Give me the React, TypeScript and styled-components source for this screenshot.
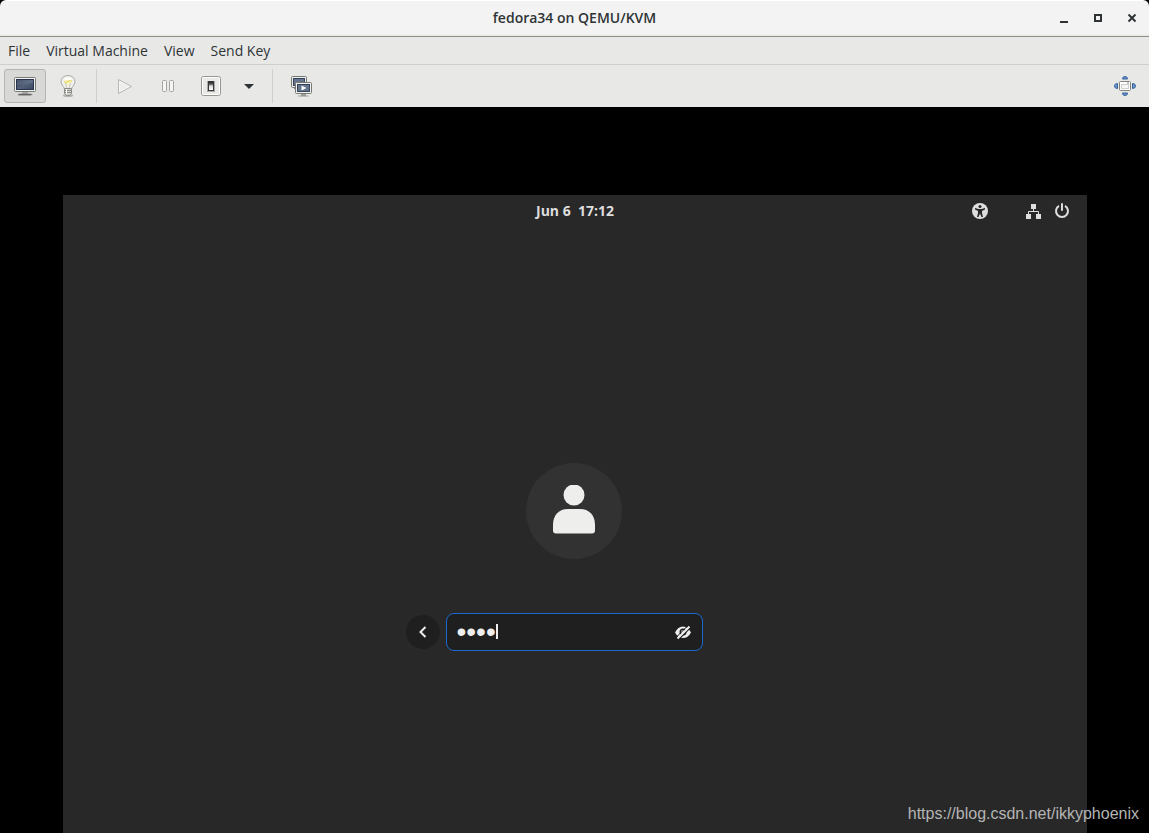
import React from "react";
import styled, { createGlobalStyle } from "styled-components";

const GlobalStyle = createGlobalStyle`
  *, *::before, *::after { box-sizing: border-box; }
  body { margin: 0; background: #000; font-family: "Open Sans", "Noto Sans", sans-serif; }
  button, input { font: inherit; color: inherit; border: 0; padding: 0; margin: 0; background: none; }
  svg { display: block; flex: none; }
`;

const Window = styled.div`
  position: relative;
  display: flex;
  flex-direction: column;
  min-height: 100vh;
  overflow: hidden;
  color: #2e3436;
`;

const TitleBar = styled.header`
  display: grid;
  grid-template-columns: 1fr auto 1fr;
  align-items: center;
  height: 37px;
  padding: 0 9px;
  background: linear-gradient(#fff 0, #fff 1px, #f3f3f3 1px, #f3f3f3 34px, #e4e4e3 36px);
  border-bottom: 1px solid #8f8f88;
  border-radius: 6px 6px 0 0;
`;

const Title = styled.h1`
  grid-column: 2;
  margin: 0;
  font-size: 14px;
  line-height: 20px;
  font-weight: 600;
`;

const WindowControls = styled.div`
  display: flex;
  justify-content: flex-end;
  gap: 18px;
`;

const WindowButton = styled.button`
  width: 16px;
  height: 16px;
`;

const MenuBar = styled.nav`
  display: flex;
  align-items: center;
  gap: 16px;
  height: 28px;
  padding: 0 8px;
  background: #e8e8e7;
  border-bottom: 1px solid #cfcfcd;
`;

const MenuItem = styled.button`
  font-size: 14px;
  line-height: 20px;
`;

const ToolBar = styled.div`
  display: flex;
  align-items: center;
  gap: 1px;
  height: 42px;
  padding: 0 3px 0 4px;
  background: #e8e8e7;
`;

const ToolButton = styled.button<{ $active?: boolean; $narrow?: boolean }>`
  display: flex;
  align-items: center;
  justify-content: center;
  width: ${(p) => (p.$narrow ? 32 : 42)}px;
  height: 34px;
  border: 1px solid ${(p) => (p.$active ? "#b4b4b1" : "transparent")};
  border-radius: 3px;
  background: ${(p) => (p.$active ? "#d8d8d6" : "transparent")};
`;

const Separator = styled.span`
  width: 1px;
  height: 34px;
  margin: 0 6px;
  background: #cfcfcd;
`;

const Spacer = styled.span`
  flex: 1;
`;

const Display = styled.main`
  flex: 1;
  display: flex;
  padding: 88px 62px 0 63px;
  background: #000;
`;

const GuestScreen = styled.section`
  flex: 1;
  background: #282828;
  color: #dedede;
`;

const TopPanel = styled.div`
  display: grid;
  grid-template-columns: 1fr auto 1fr;
  align-items: center;
  height: 32px;
  padding: 0 17px;
`;

const Clock = styled.time`
  grid-column: 2;
  font-size: 14px;
  line-height: 20px;
  font-weight: 700;
  white-space: pre;
`;

const StatusArea = styled.div`
  display: flex;
  justify-content: flex-end;
  gap: 13px;
`;

const StatusButton = styled.button<{ $apart?: boolean }>`
  width: 16px;
  height: 16px;
  margin-right: ${(p) => (p.$apart ? 24 : 0)}px;
`;

const Login = styled.form`
  display: flex;
  flex-direction: column;
  align-items: center;
  gap: 54px;
  padding: 236px 2px 40px 0;
`;

const Avatar = styled.div`
  display: flex;
  align-items: center;
  justify-content: center;
  width: 96px;
  height: 96px;
  border-radius: 50%;
  background: #323232;
`;

const EntryRow = styled.div`
  display: flex;
  align-items: center;
  gap: 6px;
  padding-right: 40px;
`;

const BackButton = styled.button`
  display: flex;
  align-items: center;
  justify-content: center;
  width: 34px;
  height: 34px;
  border-radius: 50%;
  background: #1f1f1f;
`;

const Entry = styled.div`
  position: relative;
  display: flex;
  align-items: center;
  width: 257px;
  height: 38px;
  padding: 0 10px;
  border: 1px solid #1b6acb;
  border-radius: 8px;
  background: #1f1f1f;
`;

const PasswordInput = styled.input`
  flex: 1;
  min-width: 0;
  height: 32px;
  color: #eee;
  font-family: "Liberation Sans", sans-serif;
  font-size: 28px;
  line-height: 32px;
  outline: none;
`;

const Caret = styled.span`
  position: absolute;
  left: 49px;
  top: 10px;
  width: 2px;
  height: 15px;
  background: #eee;
`;

const RevealButton = styled.button`
  width: 18px;
  height: 16px;
`;

const Watermark = styled.a`
  position: absolute;
  right: 10px;
  bottom: 9px;
  font-family: "Liberation Sans", Arial, sans-serif;
  font-size: 16px;
  line-height: 20px;
  color: #b4b4b4;
  text-decoration: none;
`;

const MonitorIcon = () => (
  <svg width="24" height="24" viewBox="0 0 24 24">
    <defs>
      <linearGradient id="screen" x1="0" y1="0" x2="1" y2="1">
        <stop offset="0" stopColor="#2c3a50" />
        <stop offset=".5" stopColor="#526078" />
        <stop offset="1" stopColor="#3a4961" />
      </linearGradient>
    </defs>
    <ellipse cx="12" cy="21" rx="8" ry="1" fill="#bcbcba" />
    <path d="M9 17h6v3H9z" fill="#aaa" />
    <path d="M6 20.5h12" stroke="#62645f" strokeWidth="1.5" strokeLinecap="round" />
    <rect x="1.5" y="3.5" width="21" height="14" rx="1" fill="#f3f3f2" stroke="#777974" />
    <rect x="3.5" y="5.5" width="17" height="10" fill="url(#screen)" stroke="#26334a" />
    <path d="M4 6h16v3L4 11z" fill="#8490a3" opacity=".3" />
  </svg>
);

const BulbIcon = () => (
  <svg width="24" height="24" viewBox="0 0 24 24">
    <ellipse cx="12" cy="21.500" rx="5" ry="1.500" fill="#b4b4b2" />
    <path d="M8.500 15.500c0-3-3.500-4-3.500-8a7 6 0 0 1 14 0c0 4-3.500 5-3.500 8z" fill="#f0f0ec" stroke="#aaaaa6" />
    <path d="M8 7q4-4 8 0l-2 3q-2 1.500-4 0z" fill="#f8f3bd" />
    <path d="M8 7.500q2 2 4 0t4 0" fill="none" stroke="#e5d24c" />
    <path d="M9.500 9l1.500 6M14.500 9L13 15" fill="none" stroke="#c9c9bd" />
    <path d="M9 5.500q3-2 6 0" fill="none" stroke="#fff" strokeWidth="2" />
    <path d="M8.500 14.500h7v5l-2 2h-3l-2-2z" fill="#d3d3d0" stroke="#888a85" />
    <path d="M9 16.500h6M9 18.500h6" stroke="#8b8d88" />
    <path d="M10.500 15v5" stroke="#fff" />
  </svg>
);

const PlayIcon = () => (
  <svg width="24" height="24" viewBox="0 0 24 24">
    <path d="M5.500 5.500v14l13-7z" fill="#ededec" stroke="#b7b7b4" strokeLinejoin="round" />
    <path d="M6.500 7.500v10l9.500-5z" fill="none" stroke="#f6f6f6" />
  </svg>
);

const PauseIcon = () => (
  <svg width="24" height="24" viewBox="0 0 24 24">
    <g fill="#f4f4f3" stroke="#a3a39f">
      <rect x="6.500" y="6.500" width="4" height="11" rx="1" />
      <rect x="13.500" y="6.500" width="4" height="11" rx="1" />
    </g>
  </svg>
);

const SwitchIcon = () => (
  <svg width="24" height="24" viewBox="0 0 24 24">
    <defs>
      <linearGradient id="rocker" x1="0" y1="0" x2="0" y2="1">
        <stop offset="0" stopColor="#222" />
        <stop offset=".3" stopColor="#666" />
        <stop offset=".5" stopColor="#ddd" />
        <stop offset="1" stopColor="#fff" />
      </linearGradient>
    </defs>
    <rect x="2.500" y="2.500" width="19" height="19" rx="2" fill="#e9e9e7" stroke="#94968f" />
    <rect x="3.500" y="3.500" width="17" height="17" rx="1" fill="none" stroke="#fff" />
    <rect x="8" y="7" width="8" height="11" fill="#aaa" />
    <rect x="9" y="7" width="6" height="10" fill="#343434" />
    <rect x="10" y="8" width="4" height="8" fill="url(#rocker)" />
  </svg>
);

const ArrowIcon = () => (
  <svg width="12" height="12" viewBox="0 0 12 12">
    <path d="M1 4h10L6 9z" fill="#2e3436" />
  </svg>
);

const SnapshotIcon = () => (
  <svg width="24" height="24" viewBox="0 0 24 24">
    <rect x="2.500" y="2.500" width="15" height="11" rx="1" fill="#eee" stroke="#777974" />
    <rect x="4.500" y="4.500" width="11" height="7" fill="#65748b" stroke="#34445d" />
    <path d="M5 14.500h5M6 16h3" stroke="#888a85" />
    <ellipse cx="14.500" cy="22" rx="6" ry="1" fill="#bcbcba" />
    <path d="M12 20h5v2h-5z" fill="#999b96" />
    <rect x="6.500" y="8.500" width="16" height="11" rx="1" fill="#f0f0ef" stroke="#777974" />
    <rect x="8.500" y="10.500" width="12" height="7" fill="#65748b" stroke="#34445d" />
    <path d="M12.500 11.500v5l5-2.500z" fill="#fff" />
  </svg>
);

const FullscreenIcon = () => (
  <svg width="24" height="24" viewBox="0 0 24 24">
    <g fill="#7196cc" stroke="#34619f">
      <path d="M9.500 5q0-2.500 2.500-2.500T14.500 5z" />
      <path d="M9.500 19q0 2.500 2.500 2.500t2.500-2.500z" />
      <path d="M4.500 9.500Q1.500 9.500 1.500 12t3 2.500z" />
      <path d="M19.500 9.500q3 0 3 2.500t-3 2.500z" />
    </g>
    <rect x="6.500" y="7.500" width="11" height="9" rx="1" fill="#fff" stroke="#83857d" />
    <rect x="8.500" y="10.500" width="7" height="4" fill="#f6f6f4" stroke="#cfcfcb" />
    <path d="M14 9h2" stroke="#888a85" />
  </svg>
);

const MinimizeIcon = () => (
  <svg width="16" height="16"><path d="M4 12h8" stroke="#2e3436" strokeWidth="2" /></svg>
);

const MaximizeIcon = () => (
  <svg width="16" height="16"><rect x="5" y="5" width="6" height="6" fill="none" stroke="#2e3436" strokeWidth="2" /></svg>
);

const CloseIcon = () => (
  <svg width="16" height="16"><path d="M4.500 4.500l7 7m0-7l-7 7" stroke="#2e3436" strokeWidth="2" /></svg>
);

const AccessibilityIcon = () => (
  <svg width="16" height="16" viewBox="0 0 16 16">
    <circle cx="8" cy="8" r="8" fill="#dedede" />
    <circle cx="8" cy="3.500" r="1.500" fill="#282828" />
    <path d="M3 5l3.500 1h3L13 5v1.500L10 8v2l1 4H9.500L8 10.500 6.500 14H5l1-4V8L3 6.500z" fill="#282828" />
  </svg>
);

const NetworkIcon = () => (
  <svg width="16" height="16" viewBox="0 0 16 16">
    <path d="M6 1h5v5H6zM1 11h5v5H1zM11 11h5v5h-5z" fill="#dedede" />
    <path d="M8.500 6v2.500M3.500 11V8.500h10V11" fill="none" stroke="#dedede" />
  </svg>
);

const PowerIcon = () => (
  <svg width="16" height="16" viewBox="0 0 16 16" fill="none" stroke="#dedede" strokeWidth="2">
    <path d="M5 2.800a6 6 0 1 0 6 0" />
    <path d="M8 1v6" strokeLinecap="round" />
  </svg>
);

const PersonIcon = () => (
  <svg width="48" height="52" viewBox="0 0 48 52" fill="#eeeeec">
    <circle cx="24" cy="10" r="10.500" />
    <path d="M3 40c0-10 6-16 15-16h12c9 0 15 6 15 16v5.500q0 3-3 3H6q-3 0-3-3z" />
  </svg>
);

const BackIcon = () => (
  <svg width="16" height="16" viewBox="0 0 16 16">
    <path d="M10.500 3L5.500 8l5 5" fill="none" stroke="#eee" strokeWidth="2" />
  </svg>
);

const HiddenIcon = () => (
  <svg width="18" height="16" viewBox="0 0 18 16">
    <path d="M1 8.500q3-6 8-6t8 6q-3 5.500-8 5.500t-8-5.500z" fill="#eee" />
    <circle cx="9" cy="8" r="3.500" fill="#1f1f1f" />
    <circle cx="9" cy="8" r="2" fill="#eee" />
    <path d="M5 15L17 3" stroke="#1f1f1f" strokeWidth="1.500" />
    <path d="M3.500 14.500L15.500 2.500" stroke="#eee" strokeWidth="2" />
    <path d="M2.500 13L14 1.500" stroke="#1f1f1f" />
  </svg>
);

export default function App() {
  return (
    <Window>
      <GlobalStyle />
      <TitleBar>
        <Title>fedora34 on QEMU/KVM</Title>
        <WindowControls>
          <WindowButton aria-label="Minimize"><MinimizeIcon /></WindowButton>
          <WindowButton aria-label="Maximize"><MaximizeIcon /></WindowButton>
          <WindowButton aria-label="Close"><CloseIcon /></WindowButton>
        </WindowControls>
      </TitleBar>
      <MenuBar>
        {["File", "Virtual Machine", "View", "Send Key"].map((label) => (
          <MenuItem key={label}>{label}</MenuItem>
        ))}
      </MenuBar>
      <ToolBar>
        <ToolButton $active aria-label="Show the graphical console"><MonitorIcon /></ToolButton>
        <ToolButton aria-label="Show virtual hardware details"><BulbIcon /></ToolButton>
        <Separator />
        <ToolButton aria-label="Run"><PlayIcon /></ToolButton>
        <ToolButton aria-label="Pause"><PauseIcon /></ToolButton>
        <ToolButton aria-label="Shut down"><SwitchIcon /></ToolButton>
        <ToolButton $narrow aria-label="Shut down options"><ArrowIcon /></ToolButton>
        <Separator />
        <ToolButton aria-label="Manage snapshots"><SnapshotIcon /></ToolButton>
        <Spacer />
        <ToolButton aria-label="Fullscreen"><FullscreenIcon /></ToolButton>
      </ToolBar>
      <Display>
        <GuestScreen>
          <TopPanel>
            <Clock>{"Jun 6  17:12"}</Clock>
            <StatusArea>
              <StatusButton $apart aria-label="Accessibility"><AccessibilityIcon /></StatusButton>
              <StatusButton aria-label="Network"><NetworkIcon /></StatusButton>
              <StatusButton aria-label="Power"><PowerIcon /></StatusButton>
            </StatusArea>
          </TopPanel>
          <Login onSubmit={(event) => event.preventDefault()}>
            <Avatar><PersonIcon /></Avatar>
            <EntryRow>
              <BackButton type="button" aria-label="Back"><BackIcon /></BackButton>
              <Entry>
                <PasswordInput type="password" aria-label="Password" defaultValue="pass" />
                <Caret />
                <RevealButton type="button" aria-label="Show password"><HiddenIcon /></RevealButton>
              </Entry>
            </EntryRow>
          </Login>
        </GuestScreen>
      </Display>
      <Watermark href="https://blog.csdn.net/ikkyphoenix">https://blog.csdn.net/ikkyphoenix</Watermark>
    </Window>
  );
}
